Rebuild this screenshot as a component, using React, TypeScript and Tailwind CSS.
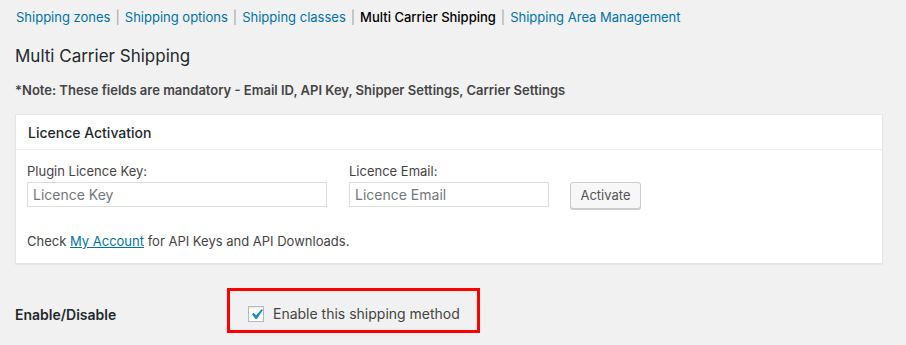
import React from "react";

export default function App() {
  const font = { fontFamily: 'Inter, "Noto Sans", sans-serif' };
  return (
    <div className="min-h-[345px] w-[906px] bg-[#f1f1f1] text-[#23282d] overflow-hidden" style={font}>
      <div className="pl-[15px] pr-[24px]">
        <ul className="flex items-center pt-[9px] text-[13px] leading-[16px] pl-[1px]">
          <li><a className="text-[#0073aa]">Shipping zones</a><span className="text-[#a0a5aa] px-[5px]">|</span></li>
          <li><a className="text-[#0073aa]">Shipping options</a><span className="text-[#a0a5aa] px-[5px]">|</span></li>
          <li><a className="text-[#0073aa]">Shipping classes</a><span className="text-[#a0a5aa] px-[5px]">|</span></li>
          <li><span className="text-[#000] font-medium">Multi Carrier Shipping</span><span className="text-[#a0a5aa] px-[5px]">|</span></li>
          <li><a className="text-[#0073aa]">Shipping Area Management</a></li>
        </ul>
        <h2 className="mt-[20px] text-[17px] leading-[22px] font-normal text-[#23282d]">Multi Carrier Shipping</h2>
        <p className="mt-[14px] text-[13px] leading-[18px] font-semibold text-[#444]">*Note: These fields are mandatory - Email ID, API Key, Shipper Settings, Carrier Settings</p>
        <div className="mt-[15px] w-[868px] bg-white border border-[#e5e5e5] shadow-[0_1px_1px_rgba(0,0,0,0.04)]">
          <div className="h-[35px] border-b border-[#eeeeee] flex items-center px-[12px]">
            <h3 className="text-[14px] font-medium text-[#23282d]">Licence Activation</h3>
          </div>
          <div className="px-[11px] pt-[13px] pb-[13px]">
            <div className="flex items-end">
              <div className="flex flex-col">
                <label className="text-[13px] leading-[16px] text-[#444]">Plugin Licence Key:</label>
                <input
                  placeholder="Licence Key"
                  className="mt-[3px] w-[300px] h-[25px] border border-[#dddddd] px-[5px] text-[14px] text-[#32373c] placeholder:text-[#72777c] outline-none bg-white"
                  style={font}
                />
              </div>
              <div className="flex flex-col ml-[22px]">
                <label className="text-[13px] leading-[16px] text-[#444]">Licence Email:</label>
                <input
                  placeholder="Licence Email"
                  className="mt-[3px] w-[200px] h-[25px] border border-[#dddddd] px-[5px] text-[14px] text-[#32373c] placeholder:text-[#72777c] outline-none bg-white"
                  style={font}
                />
              </div>
              <button
                className="ml-[21px] mb-[-2px] w-[71px] h-[27px] rounded-[3px] border border-[#cccccc] bg-[#f7f7f7] text-[13px] text-[#555] shadow-[0_1px_0_#cccccc]"
                style={font}
              >
                Activate
              </button>
            </div>
            <p className="mt-[25px] text-[13px] leading-[18px] text-[#444]">
              Check <a className="text-[#0073aa] underline">My Account</a> for API Keys and API Downloads.
            </p>
          </div>
        </div>
        <div className="mt-[24px] flex items-start">
          <div className="w-[212px] pt-[18px] text-[14px] leading-[18px] font-semibold text-[#23282d]">Enable/Disable</div>
          <div className="w-[253px] h-[45px] border-[3px] border-[#ff0000] flex items-start pl-[18px] pt-[15px]">
            <span className="w-[16px] h-[16px] border border-[#b4b9be] bg-white flex items-center justify-center shadow-[inset_0_1px_2px_rgba(0,0,0,0.1)] overflow-visible">
              <svg width="21" height="21" viewBox="0 0 20 20" className="shrink-0 -m-[3px]">
                <path d="M14.83 4.89l1.34.94-5.81 8.38H9.02L5.78 9.67l1.34-1.25 2.57 2.4z" fill="#1e8cbe" />
              </svg>
            </span>
            <span className="ml-[9px] text-[14px] leading-[16px] text-[#444]">Enable this shipping method</span>
          </div>
        </div>
      </div>
    </div>
  );
}
